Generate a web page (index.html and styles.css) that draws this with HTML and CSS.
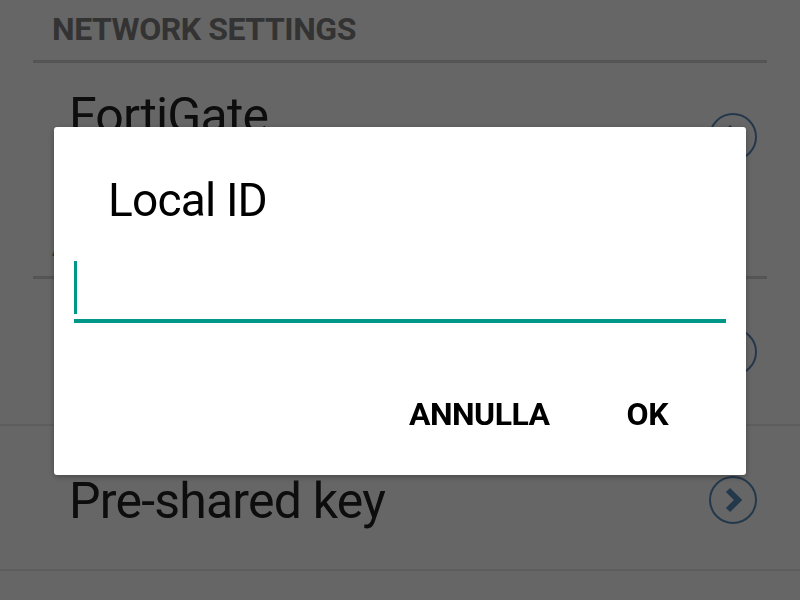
FILE: index.html
```html
<!DOCTYPE html>
<html lang="it">
<head>
<meta charset="utf-8">
<title>Local ID</title>
<link rel="stylesheet" href="styles.css">
</head>
<body>
<div class="page">
  <div class="section-header"><span class="section-title">NETWORK SETTINGS</span></div>
  <div class="row row-first">
    <span class="row-label row-label-top">FortiGate</span>
    <span class="chev">
      <svg viewBox="0 0 48 48" width="48" height="48"><circle cx="24" cy="24" r="23" fill="none" stroke="#5a8cbd" stroke-width="2"/><path d="M19 14 L29 24 L19 34" fill="none" stroke="#5a8cbd" stroke-width="6" stroke-linejoin="miter"/></svg>
    </span>
  </div>
  <div class="section-header section-header-2"><span class="section-title">AUTHENTICATION</span></div>
  <div class="row row-mid">
    <span class="row-label">Local ID</span>
    <span class="chev">
      <svg viewBox="0 0 48 48" width="48" height="48"><circle cx="24" cy="24" r="23" fill="none" stroke="#5a8cbd" stroke-width="2"/><path d="M19 14 L29 24 L19 34" fill="none" stroke="#5a8cbd" stroke-width="6" stroke-linejoin="miter"/></svg>
    </span>
  </div>
  <div class="row row-last">
    <span class="row-label row-label-low">Pre-shared key</span>
    <span class="chev chev-low">
      <svg viewBox="0 0 48 48" width="48" height="48"><circle cx="24" cy="24" r="23" fill="none" stroke="#5a8cbd" stroke-width="2"/><path d="M19 14 L29 24 L19 34" fill="none" stroke="#5a8cbd" stroke-width="6" stroke-linejoin="miter"/></svg>
    </span>
  </div>
</div>

<div class="scrim">
  <div class="dialog">
    <div class="dialog-title">Local ID</div>
    <div class="field">
      <span class="cursor"></span>
    </div>
    <div class="actions">
      <span class="btn">ANNULLA</span>
      <span class="btn btn-ok">OK</span>
    </div>
  </div>
</div>
</body>
</html>
```
FILE: styles.css
```css
html, body {
  margin: 0;
  padding: 0;
  background: #ffffff;
  font-family: Roboto, "Noto Sans", sans-serif;
}

.page {
  width: 800px;
  height: 600px;
  overflow: hidden;
}

.section-header {
  margin: 0 33px;
  padding: 9px 0 11px 19px;
  border-bottom: 3px solid #d4d4d4;
}

.section-header-2 {
  padding-top: 15px;
}

.section-title {
  display: block;
  font-size: 32px;
  line-height: 40px;
  font-weight: 700;
  letter-spacing: -0.45px;
  color: #808080;
}

.row {
  display: flex;
  align-items: center;
  justify-content: space-between;
  padding: 0 43px 0 69px;
  border-bottom: 2px solid #e8e8e8;
}

.row-first {
  height: 147px;
  border-bottom: none;
}

.row-mid {
  height: 145px;
}

.row-last {
  height: 143px;
}

.row-label {
  font-size: 50px;
  line-height: 56px;
  letter-spacing: -0.8px;
  color: #222222;
}

.row-label-top {
  margin-bottom: 42px;
}

.row-label-low {
  margin-top: 7px;
}

.chev {
  display: flex;
  width: 48px;
  height: 48px;
}

.chev-low {
  margin-top: 4px;
}

.scrim {
  position: fixed;
  inset: 0;
  background: rgba(0, 0, 0, 0.6);
  display: flex;
  justify-content: center;
  align-items: flex-start;
}

.dialog {
  margin-top: 127px;
  width: 692px;
  height: 348px;
  box-sizing: border-box;
  background: #ffffff;
  border-radius: 3px;
  box-shadow: 0 2px 6px rgba(0, 0, 0, 0.3);
  padding: 45px 20px 0 20px;
  display: flex;
  flex-direction: column;
}

.dialog-title {
  padding-left: 34px;
  font-size: 46px;
  line-height: 56px;
  letter-spacing: -0.8px;
  color: #000000;
}

.field {
  margin-top: 33px;
  height: 58px;
  border-bottom: 4px solid #009688;
  display: flex;
  align-items: flex-start;
}

.cursor {
  width: 3px;
  height: 53px;
  background: #009688;
}

.actions {
  display: flex;
  justify-content: flex-end;
  margin-top: 71px;
  padding-right: 58px;
  gap: 77px;
}

.btn {
  font-size: 32px;
  line-height: 40px;
  font-weight: 700;
  letter-spacing: -0.5px;
  color: #000000;
}
```
